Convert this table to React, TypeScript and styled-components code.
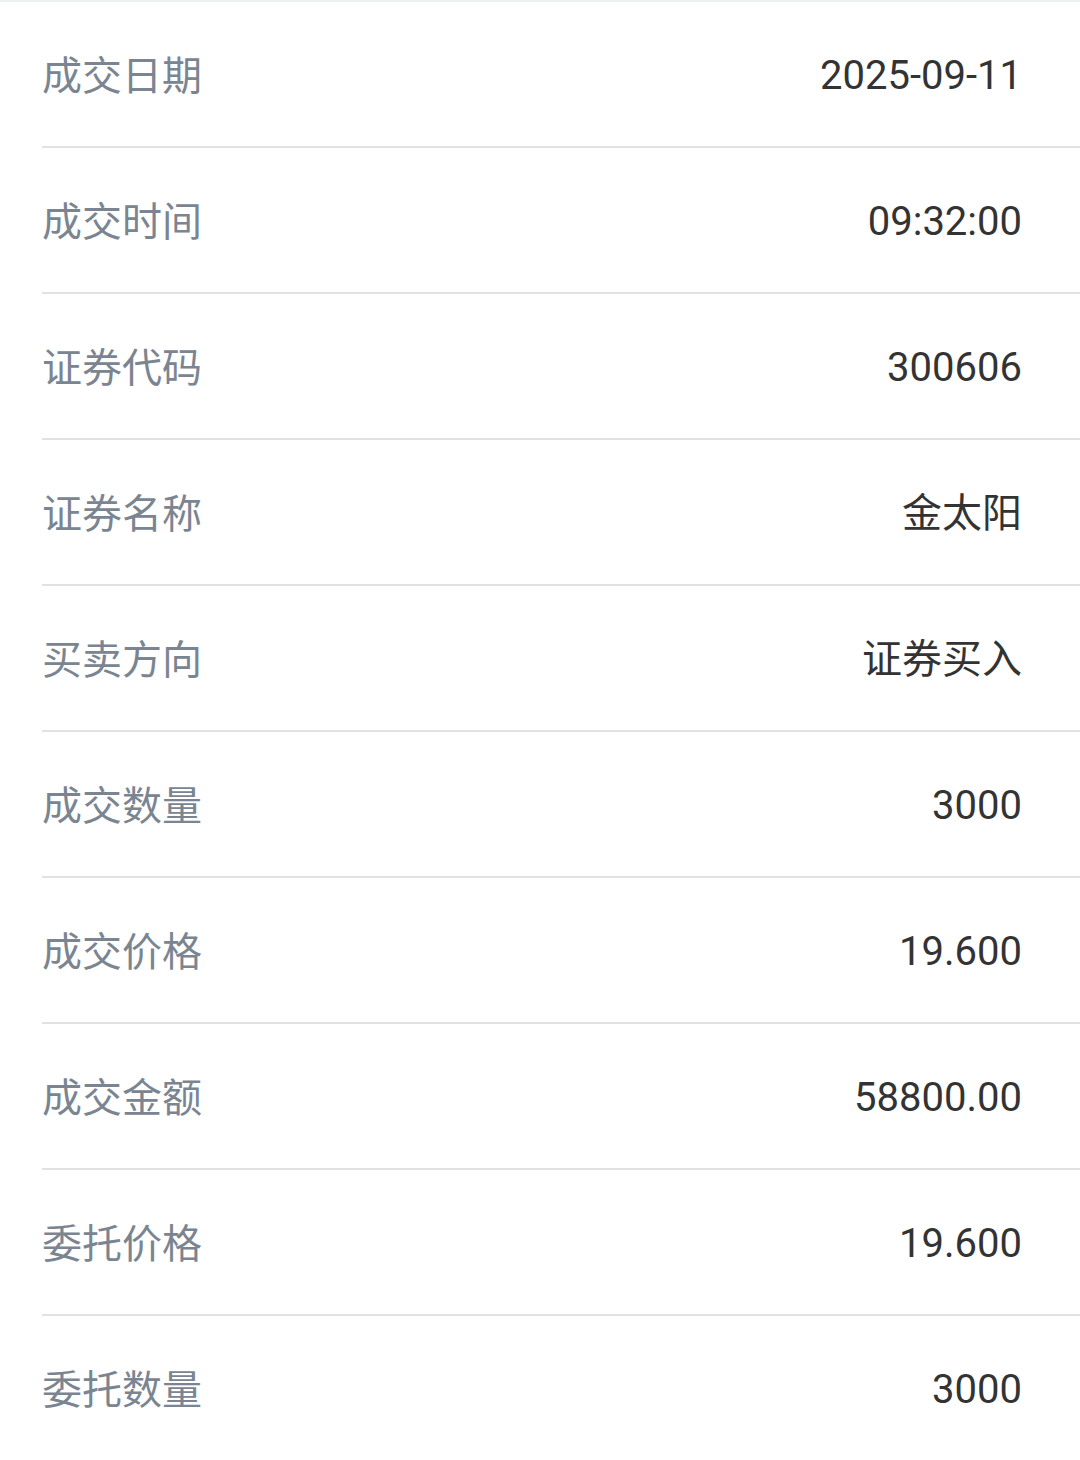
import React from "react";
import styled, { createGlobalStyle } from "styled-components";

const GlobalStyle = createGlobalStyle`
  html, body {
    margin: 0;
    padding: 0;
    background: #fff;
  }
`;

const rows = [
  { label: "成交日期", value: "2025-09-11" },
  { label: "成交时间", value: "09:32:00" },
  { label: "证券代码", value: "300606" },
  { label: "证券名称", value: "金太阳", text: true },
  { label: "买卖方向", value: "证券买入", text: true },
  { label: "成交数量", value: "3000" },
  { label: "成交价格", value: "19.600" },
  { label: "成交金额", value: "58800.00" },
  { label: "委托价格", value: "19.600" },
  { label: "委托数量", value: "3000" },
];

const Page = styled.div`
  width: 1080px;
  min-height: 1460px;
  background: #fff;
  border-top: 2px solid #eef1f4;
  box-sizing: border-box;
`;

const List = styled.ul`
  list-style: none;
  margin: 0;
  padding: 0 0 0 42px;
`;

const Row = styled.li<{ $last?: boolean }>`
  height: 144px;
  display: flex;
  align-items: center;
  justify-content: space-between;
  padding-right: 58px;
  border-bottom: ${(p) => (p.$last ? "none" : "2px solid #e2e2e2")};
`;

const Label = styled.span`
  font-family: "Noto Sans CJK SC", "Noto Sans", sans-serif;
  font-size: 40px;
  color: #7a8591;
  margin-top: -2px;
`;

const Value = styled.span<{ $text?: boolean }>`
  font-family: Roboto, "Noto Sans CJK SC", sans-serif;
  font-size: 40px;
  color: #333;
  padding-top: ${(p) => (p.$text ? "0" : "3px")};
  margin-top: ${(p) => (p.$text ? "-4px" : "0")};
`;

export default function App() {
  return (
    <>
      <GlobalStyle />
      <Page>
        <List>
          {rows.map((row, i) => (
            <Row key={row.label} $last={i === rows.length - 1}>
              <Label>{row.label}</Label>
              <Value $text={row.text}>{row.value}</Value>
            </Row>
          ))}
        </List>
      </Page>
    </>
  );
}
